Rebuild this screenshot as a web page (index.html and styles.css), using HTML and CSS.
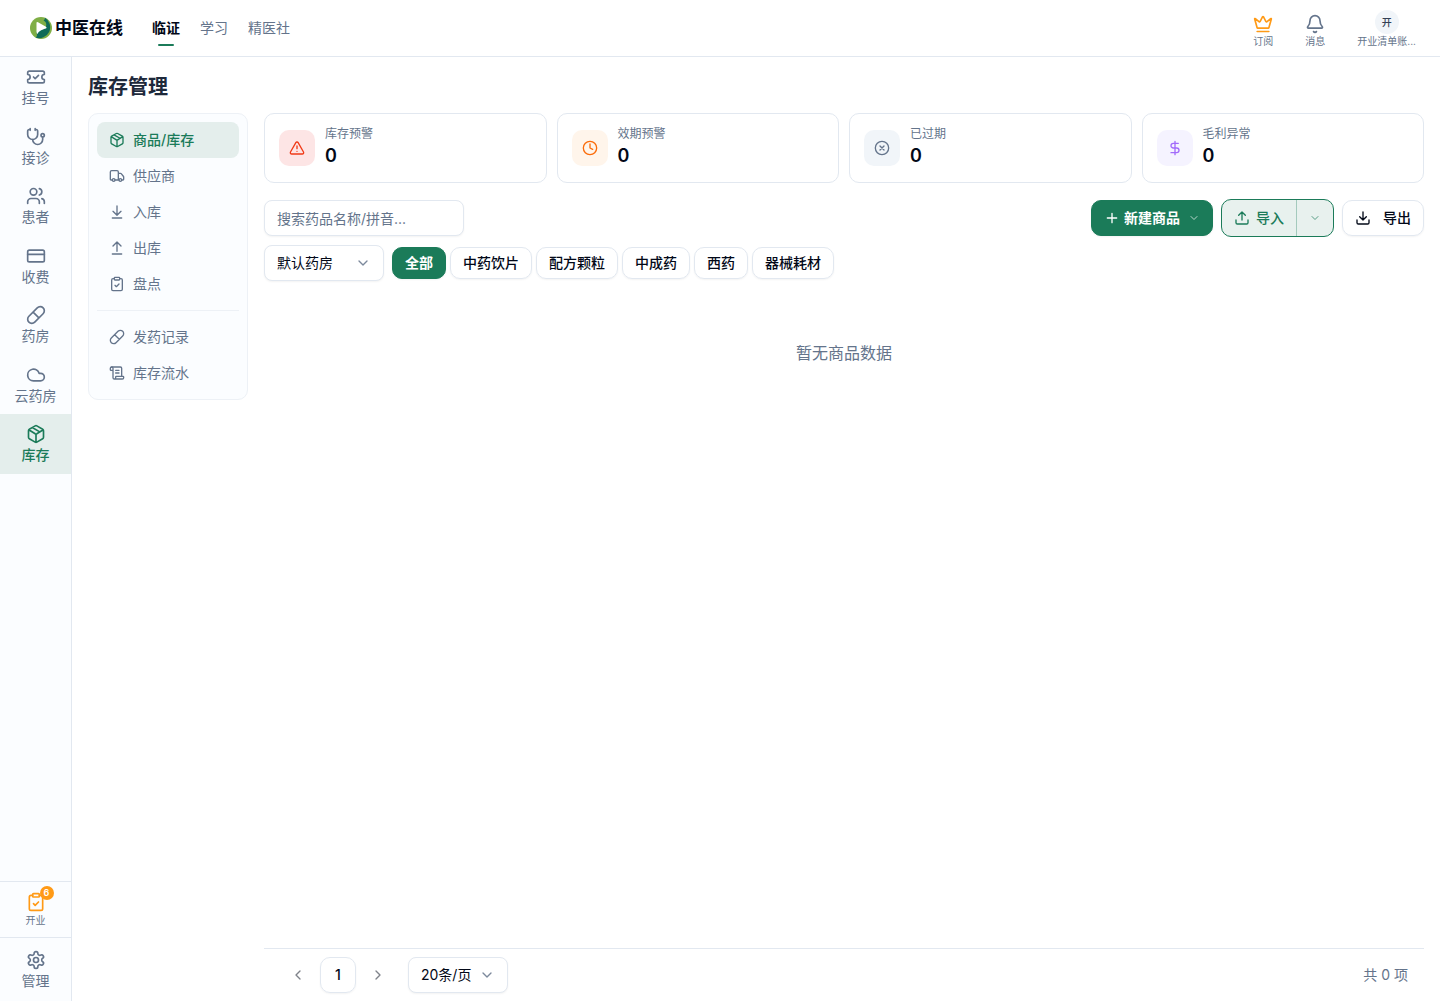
FILE: index.html
```html
<!DOCTYPE html>
<html lang="zh-CN">

<head>
    <meta charset="UTF-8">
    <meta name="viewport" content="width=device-width, initial-scale=1.0">
    <title>库存管理 - 中医在线</title>
    <link rel="stylesheet" href="styles.css">
</head>

<body>
    <!-- 图标 -->
    <svg class="sprite" aria-hidden="true">
        <symbol id="i-ticket" viewBox="0 0 24 24">
            <path d="M2 9a3 3 0 1 1 0 6v2a2 2 0 0 0 2 2h16a2 2 0 0 0 2-2v-2a3 3 0 1 1 0-6V7a2 2 0 0 0-2-2H4a2 2 0 0 0-2 2Z" />
            <path d="m9 12 2 2 4-4" />
        </symbol>
        <symbol id="i-stethoscope" viewBox="0 0 24 24">
            <path d="M11 2v2M5 2v2M5 3H4a2 2 0 0 0-2 2v4a6 6 0 0 0 12 0V5a2 2 0 0 0-2-2h-1" />
            <path d="M8 15a6 6 0 0 0 12 0v-3" />
            <circle cx="20" cy="10" r="2" />
        </symbol>
        <symbol id="i-users" viewBox="0 0 24 24">
            <path d="M16 21v-2a4 4 0 0 0-4-4H6a4 4 0 0 0-4 4v2" />
            <circle cx="9" cy="7" r="4" />
            <path d="M22 21v-2a4 4 0 0 0-3-3.87M16 3.13a4 4 0 0 1 0 7.75" />
        </symbol>
        <symbol id="i-card" viewBox="0 0 24 24">
            <rect width="20" height="14" x="2" y="5" rx="2" />
            <path d="M2 10h20" />
        </symbol>
        <symbol id="i-pill" viewBox="0 0 24 24">
            <path d="m10.5 20.5 10-10a4.95 4.95 0 1 0-7-7l-10 10a4.95 4.95 0 1 0 7 7ZM8.5 8.5l7 7" />
        </symbol>
        <symbol id="i-cloud" viewBox="0 0 24 24">
            <path d="M17.5 19H9a7 7 0 1 1 6.71-9h1.79a4.5 4.5 0 1 1 0 9Z" />
        </symbol>
        <symbol id="i-package" viewBox="0 0 24 24">
            <path d="M11 21.73a2 2 0 0 0 2 0l7-4A2 2 0 0 0 21 16V8a2 2 0 0 0-1-1.73l-7-4a2 2 0 0 0-2 0l-7 4A2 2 0 0 0 3 8v8a2 2 0 0 0 1 1.73zM12 22V12M3.3 7l7.703 4.734a2 2 0 0 0 1.994 0L20.7 7M7.5 4.27l9 5.15" />
        </symbol>
        <symbol id="i-clipboard" viewBox="0 0 24 24">
            <rect width="8" height="4" x="8" y="2" rx="1" />
            <path d="M16 4h2a2 2 0 0 1 2 2v14a2 2 0 0 1-2 2H6a2 2 0 0 1-2-2V6a2 2 0 0 1 2-2h2M9 14l2 2 4-4" />
        </symbol>
        <symbol id="i-settings" viewBox="0 0 24 24">
            <path d="M12.22 2h-.44a2 2 0 0 0-2 2v.18a2 2 0 0 1-1 1.73l-.43.25a2 2 0 0 1-2 0l-.15-.08a2 2 0 0 0-2.73.73l-.22.38a2 2 0 0 0 .73 2.73l.15.1a2 2 0 0 1 1 1.72v.51a2 2 0 0 1-1 1.74l-.15.09a2 2 0 0 0-.73 2.73l.22.38a2 2 0 0 0 2.73.73l.15-.08a2 2 0 0 1 2 0l.43.25a2 2 0 0 1 1 1.73V20a2 2 0 0 0 2 2h.44a2 2 0 0 0 2-2v-.18a2 2 0 0 1 1-1.73l.43-.25a2 2 0 0 1 2 0l.15.08a2 2 0 0 0 2.73-.73l.22-.39a2 2 0 0 0-.73-2.73l-.15-.08a2 2 0 0 1-1-1.74v-.5a2 2 0 0 1 1-1.74l.15-.09a2 2 0 0 0 .73-2.73l-.22-.38a2 2 0 0 0-2.73-.73l-.15.08a2 2 0 0 1-2 0l-.43-.25a2 2 0 0 1-1-1.73V4a2 2 0 0 0-2-2z" />
            <circle cx="12" cy="12" r="3" />
        </symbol>
        <symbol id="i-truck" viewBox="0 0 24 24">
            <path d="M14 18V6a2 2 0 0 0-2-2H4a2 2 0 0 0-2 2v11a1 1 0 0 0 1 1h2M15 18H9M19 18h2a1 1 0 0 0 1-1v-3.65a1 1 0 0 0-.22-.624l-3.48-4.35A1 1 0 0 0 17.52 8H14" />
            <circle cx="17" cy="18" r="2" />
            <circle cx="7" cy="18" r="2" />
        </symbol>
        <symbol id="i-arrow-down" viewBox="0 0 24 24">
            <path d="M12 17V3M6 11l6 6 6-6M19 21H5" />
        </symbol>
        <symbol id="i-arrow-up" viewBox="0 0 24 24">
            <path d="m18 9-6-6-6 6M12 3v14M5 21h14" />
        </symbol>
        <symbol id="i-scroll" viewBox="0 0 24 24">
            <path d="M15 12h-5M15 8h-5M19 17V5a2 2 0 0 0-2-2H4" />
            <path d="M8 21h12a2 2 0 0 0 2-2v-1a1 1 0 0 0-1-1H11a1 1 0 0 0-1 1v1a2 2 0 1 1-4 0V5a2 2 0 1 0-4 0v2a1 1 0 0 0 1 1h3" />
        </symbol>
        <symbol id="i-crown" viewBox="0 0 24 24">
            <path d="M11.562 3.266a.5.5 0 0 1 .876 0L15.39 8.87a1 1 0 0 0 1.516.294L21.183 5.5a.5.5 0 0 1 .798.519l-2.834 10.246a1 1 0 0 1-.956.734H5.81a1 1 0 0 1-.957-.734L2.02 6.02a.5.5 0 0 1 .798-.519l4.276 3.664a1 1 0 0 0 1.516-.294zM5 21h14" />
        </symbol>
        <symbol id="i-bell" viewBox="0 0 24 24">
            <path d="M10.268 21a2 2 0 0 0 3.464 0M3.262 15.326A1 1 0 0 0 4 17h16a1 1 0 0 0 .74-1.673C19.41 13.956 18 12.499 18 8A6 6 0 0 0 6 8c0 4.499-1.411 5.956-2.738 7.326" />
        </symbol>
        <symbol id="i-alert" viewBox="0 0 24 24">
            <path d="m21.73 18-8-14a2 2 0 0 0-3.48 0l-8 14A2 2 0 0 0 4 21h16a2 2 0 0 0 1.73-3M12 9v4M12 17h.01" />
        </symbol>
        <symbol id="i-clock" viewBox="0 0 24 24">
            <circle cx="12" cy="12" r="10" />
            <path d="M12 6v6l4 2" />
        </symbol>
        <symbol id="i-circle-x" viewBox="0 0 24 24">
            <circle cx="12" cy="12" r="10" />
            <path d="m15 9-6 6M9 9l6 6" />
        </symbol>
        <symbol id="i-dollar" viewBox="0 0 24 24">
            <path d="M12 2v20M17 5H9.5a3.5 3.5 0 0 0 0 7h5a3.5 3.5 0 0 1 0 7H6" />
        </symbol>
        <symbol id="i-plus" viewBox="0 0 24 24">
            <path d="M5 12h14M12 5v14" />
        </symbol>
        <symbol id="i-upload" viewBox="0 0 24 24">
            <path d="M21 15v4a2 2 0 0 1-2 2H5a2 2 0 0 1-2-2v-4M17 8l-5-5-5 5M12 3v12" />
        </symbol>
        <symbol id="i-download" viewBox="0 0 24 24">
            <path d="M21 15v4a2 2 0 0 1-2 2H5a2 2 0 0 1-2-2v-4M7 10l5 5 5-5M12 15V3" />
        </symbol>
        <symbol id="i-down" viewBox="0 0 24 24">
            <path d="m6 9 6 6 6-6" />
        </symbol>
        <symbol id="i-left" viewBox="0 0 24 24">
            <path d="m15 18-6-6 6-6" />
        </symbol>
        <symbol id="i-right" viewBox="0 0 24 24">
            <path d="m9 18 6-6-6-6" />
        </symbol>
    </svg>

    <header class="header">
        <a class="logo" href="#">
            <svg class="logo-mark" viewBox="0 0 22 22" aria-hidden="true">
                <circle cx="11" cy="11" r="11" fill="#7fae45" />
                <path d="M15 .8A11 11 0 0 1 5.500 20.500C7.500 19.500 7 17.500 6.500 15L15 11C17.500 8 16 4.500 13.500 3.500C14.500 2.800 15 2 15 .8Z" fill="#0f6b58" />
                <path d="M6.500 6Q6.500 4.500 8 5.200L16 9.800Q17.300 10.700 16 11.600C13 12.500 9 13.500 7.500 17Q6.500 16.500 6.500 15Z" fill="#fff" />
            </svg>
            <span>中医在线</span>
        </a>
        <nav class="top-nav">
            <a class="active" href="#">临证</a>
            <a href="#">学习</a>
            <a href="#">精医社</a>
        </nav>
        <div class="header-right">
            <button class="header-btn subscribe" type="button">
                <svg class="icon icon-lg"><use href="#i-crown" /></svg>
                <span>订阅</span>
            </button>
            <button class="header-btn" type="button">
                <svg class="icon icon-lg"><use href="#i-bell" /></svg>
                <span>消息</span>
            </button>
            <button class="header-btn" type="button">
                <span class="avatar">开</span>
                <span>开业清单账...</span>
            </button>
        </div>
    </header>

    <div class="layout">
        <aside class="sidebar">
            <nav class="side-nav">
                <a class="side-item" href="#"><svg class="icon icon-lg"><use href="#i-ticket" /></svg>挂号</a>
                <a class="side-item" href="#"><svg class="icon icon-lg"><use href="#i-stethoscope" /></svg>接诊</a>
                <a class="side-item" href="#"><svg class="icon icon-lg"><use href="#i-users" /></svg>患者</a>
                <a class="side-item" href="#"><svg class="icon icon-lg"><use href="#i-card" /></svg>收费</a>
                <a class="side-item" href="#"><svg class="icon icon-lg"><use href="#i-pill" /></svg>药房</a>
                <a class="side-item" href="#"><svg class="icon icon-lg"><use href="#i-cloud" /></svg>云药房</a>
                <a class="side-item active" href="#"><svg class="icon icon-lg"><use href="#i-package" /></svg>库存</a>
            </nav>
            <div class="side-section">
                <button class="side-item opening" type="button">
                    <span class="badge-wrap">
                        <svg class="icon icon-lg"><use href="#i-clipboard" /></svg>
                        <span class="badge">6</span>
                    </span>
                    <span>开业</span>
                </button>
            </div>
            <div class="side-section manage">
                <a class="side-item" href="#"><svg class="icon icon-lg"><use href="#i-settings" /></svg>管理</a>
            </div>
        </aside>

        <main class="main">
            <h1>库存管理</h1>
            <div class="content">
                <nav class="menu">
                    <a class="menu-item active" href="#"><svg class="icon"><use href="#i-package" /></svg>商品/库存</a>
                    <a class="menu-item" href="#"><svg class="icon"><use href="#i-truck" /></svg>供应商</a>
                    <a class="menu-item" href="#"><svg class="icon"><use href="#i-arrow-down" /></svg>入库</a>
                    <a class="menu-item" href="#"><svg class="icon"><use href="#i-arrow-up" /></svg>出库</a>
                    <a class="menu-item" href="#"><svg class="icon"><use href="#i-clipboard" /></svg>盘点</a>
                    <hr>
                    <a class="menu-item" href="#"><svg class="icon"><use href="#i-pill" /></svg>发药记录</a>
                    <a class="menu-item" href="#"><svg class="icon"><use href="#i-scroll" /></svg>库存流水</a>
                </nav>

                <section class="panel">
                    <div class="cards">
                        <button class="card" type="button">
                            <span class="card-icon red"><svg class="icon"><use href="#i-alert" /></svg></span>
                            <span class="card-text"><span class="card-label">库存预警</span><span class="card-value">0</span></span>
                        </button>
                        <button class="card" type="button">
                            <span class="card-icon orange"><svg class="icon"><use href="#i-clock" /></svg></span>
                            <span class="card-text"><span class="card-label">效期预警</span><span class="card-value">0</span></span>
                        </button>
                        <button class="card" type="button">
                            <span class="card-icon gray"><svg class="icon"><use href="#i-circle-x" /></svg></span>
                            <span class="card-text"><span class="card-label">已过期</span><span class="card-value">0</span></span>
                        </button>
                        <button class="card" type="button">
                            <span class="card-icon purple"><svg class="icon"><use href="#i-dollar" /></svg></span>
                            <span class="card-text"><span class="card-label">毛利异常</span><span class="card-value">0</span></span>
                        </button>
                    </div>

                    <div class="toolbar">
                        <input class="search" type="text" placeholder="搜索药品名称/拼音..." aria-label="搜索药品">
                        <div class="actions">
                            <button class="btn primary" type="button">
                                <svg class="icon"><use href="#i-plus" /></svg>
                                <span>新建商品</span>
                                <svg class="icon icon-sm"><use href="#i-down" /></svg>
                            </button>
                            <div class="split">
                                <button class="split-main" type="button"><svg class="icon"><use href="#i-upload" /></svg>导入</button>
                                <button class="split-more" type="button" aria-label="更多导入方式"><svg class="icon icon-sm"><use href="#i-down" /></svg></button>
                            </div>
                            <button class="btn export" type="button"><svg class="icon"><use href="#i-download" /></svg>导出</button>
                        </div>
                    </div>

                    <div class="filters">
                        <div class="select store">
                            <select aria-label="药房">
                                <option>默认药房</option>
                            </select>
                            <svg class="icon"><use href="#i-down" /></svg>
                        </div>
                        <div class="chips">
                            <button class="chip active" type="button">全部</button>
                            <button class="chip" type="button">中药饮片</button>
                            <button class="chip" type="button">配方颗粒</button>
                            <button class="chip" type="button">中成药</button>
                            <button class="chip" type="button">西药</button>
                            <button class="chip" type="button">器械耗材</button>
                        </div>
                    </div>

                    <div class="empty">暂无商品数据</div>

                    <footer class="pager">
                        <div class="pages">
                            <button class="page" type="button" aria-label="上一页" disabled><svg class="icon"><use href="#i-left" /></svg></button>
                            <button class="page current" type="button">1</button>
                            <button class="page" type="button" aria-label="下一页" disabled><svg class="icon"><use href="#i-right" /></svg></button>
                        </div>
                        <div class="select size">
                            <select aria-label="每页条数">
                                <option>20条/页</option>
                            </select>
                            <svg class="icon"><use href="#i-down" /></svg>
                        </div>
                        <span class="total">共 0 项</span>
                    </footer>
                </section>
            </div>
        </main>
    </div>
</body>

</html>
```
FILE: styles.css
```css
* {
    box-sizing: border-box;
}

body {
    margin: 0;
    height: 100vh;
    display: flex;
    flex-direction: column;
    font-family: Inter, "Noto Sans CJK SC", sans-serif;
    font-size: 14px;
    line-height: 20px;
    color: #020817;
    background-color: #fff;
}

a {
    color: inherit;
    text-decoration: none;
}

button,
input,
select {
    font: inherit;
    color: inherit;
}

button {
    padding: 0;
    border: none;
    background: none;
    cursor: pointer;
}

.sprite {
    display: none;
}

.icon {
    width: 16px;
    height: 16px;
    flex-shrink: 0;
    fill: none;
    stroke: currentColor;
    stroke-width: 2;
    stroke-linecap: round;
    stroke-linejoin: round;
}

.icon-lg {
    width: 20px;
    height: 20px;
}

.icon-sm {
    width: 12px;
    height: 12px;
    opacity: 0.7;
}

/* 顶栏 */
.header {
    height: 57px;
    flex-shrink: 0;
    display: flex;
    align-items: center;
    padding: 0 16px 0 30px;
    border-bottom: 1px solid #e2e8f0;
}

.logo {
    display: flex;
    align-items: center;
    gap: 3px;
    font-size: 17px;
    font-weight: 600;
}

.logo-mark {
    width: 22px;
    height: 22px;
}

.top-nav {
    display: flex;
    gap: 20px;
    margin-left: 29px;
    color: #64748b;
}

.top-nav a {
    padding: 8px 0;
}

.top-nav .active {
    position: relative;
    color: #020817;
    font-weight: 600;
}

.top-nav .active::after {
    content: "";
    position: absolute;
    left: 50%;
    bottom: 0;
    width: 16px;
    height: 2px;
    margin-left: -8px;
    border-radius: 1px;
    background-color: #1b7b59;
}

.header-right {
    display: flex;
    margin-left: auto;
    padding-top: 2px;
    gap: 16px;
}

.header-btn {
    display: flex;
    flex-direction: column;
    align-items: center;
    justify-content: flex-end;
    padding: 0 8px;
    font-size: 10px;
    line-height: 15px;
    color: #64748b;
}

.subscribe .icon {
    color: #ff9a16;
}

.avatar {
    width: 24px;
    height: 24px;
    border-radius: 50%;
    line-height: 24px;
    font-weight: 500;
    color: #334155;
    background-color: #f1f5f9;
}

.layout {
    flex: 1;
    display: flex;
    min-height: 0;
}

/* 左侧导航 */
.sidebar {
    width: 72px;
    flex-shrink: 0;
    display: flex;
    flex-direction: column;
    border-right: 1px solid #e2e8f0;
    background-color: #fbfdff;
    color: #64748b;
}

.side-nav {
    flex: 1;
}

.side-item {
    width: 100%;
    display: flex;
    flex-direction: column;
    align-items: center;
    gap: 2px;
    padding: 10px 0;
    line-height: 1.25;
}

.side-item.active {
    color: #1b7b59;
    background-color: #e4eeec;
    font-weight: 500;
}

.side-section {
    border-top: 1px solid #e2e8f0;
}

.manage {
    padding: 2px 0;
}

.opening {
    font-size: 10px;
}

.badge-wrap {
    position: relative;
    display: flex;
    color: #ff9a16;
}

.badge {
    position: absolute;
    top: -6px;
    right: -8px;
    width: 14px;
    height: 14px;
    border-radius: 50%;
    font-size: 9px;
    line-height: 14px;
    font-weight: 600;
    color: #fff;
    background-color: #ff9a16;
}

/* 主区域 */
.main {
    flex: 1;
    min-width: 0;
    display: flex;
    flex-direction: column;
    padding: 16px 16px 0;
}

h1 {
    margin: 0 0 12px;
    font-size: 20px;
    line-height: 28px;
    font-weight: 600;
    color: #1e293b;
}

.content {
    flex: 1;
    display: flex;
    gap: 16px;
}

.menu {
    width: 160px;
    flex-shrink: 0;
    align-self: flex-start;
    padding: 8px;
    border: 1px solid #edf1f6;
    border-radius: 10px;
    background-color: #fbfdff;
    color: #64748b;
}

.menu-item {
    display: flex;
    align-items: center;
    gap: 8px;
    padding: 8px 12px;
    border-radius: 8px;
}

.menu-item.active {
    color: #1b7b59;
    background-color: #e4eeec;
    font-weight: 500;
}

.menu hr {
    margin: 8px 0;
    border: none;
    border-top: 1px solid #edf1f6;
}

.panel {
    flex: 1;
    min-width: 0;
    display: flex;
    flex-direction: column;
}

.cards {
    display: grid;
    grid-template-columns: repeat(4, 1fr);
    gap: 10px;
    margin-bottom: 16px;
}

.card {
    display: flex;
    align-items: center;
    gap: 10px;
    padding: 12px 14px;
    border: 1px solid #e2e8f0;
    border-radius: 10px;
    text-align: left;
}

.card-icon {
    width: 36px;
    height: 36px;
    display: flex;
    align-items: center;
    justify-content: center;
    border-radius: 10px;
}

.red {
    color: #f03a17;
    background-color: #fde5e5;
}

.orange {
    color: #fb6c0a;
    background-color: #fff5eb;
}

.gray {
    color: #64748b;
    background-color: #f1f5f9;
}

.purple {
    color: #a26bfa;
    background-color: #f5f3ff;
}

.card-text {
    display: flex;
    flex-direction: column;
}

.card-label {
    font-size: 12px;
    line-height: 16px;
    color: #64748b;
}

.card-value {
    font-size: 18px;
    line-height: 28px;
    font-weight: 600;
}

/* 工具栏 */
.toolbar {
    display: flex;
    align-items: center;
    justify-content: space-between;
    margin-bottom: 8px;
}

.search {
    width: 200px;
    height: 36px;
    padding: 0 12px;
    border: 1px solid #e2e8f0;
    border-radius: 8px;
    background-color: #fff;
    box-shadow: 0 1px 2px rgba(0, 0, 0, 0.05);
}

.search::placeholder {
    color: #64748b;
}

.actions {
    display: flex;
    align-items: center;
    gap: 8px;
}

.btn {
    height: 36px;
    display: flex;
    align-items: center;
    padding: 0 12px;
    border: 1px solid #e2e8f0;
    border-radius: 10px;
    font-weight: 500;
    box-shadow: 0 1px 2px rgba(0, 0, 0, 0.05);
}

.primary {
    gap: 4px;
    border-color: #1b7b59;
    color: #fff;
    background-color: #1b7b59;
    font-weight: 600;
}

.primary .icon-sm {
    margin-left: 4px;
}

.export {
    gap: 12px;
}

.split {
    height: 38px;
    display: flex;
    overflow: hidden;
    border: 1px solid #1b7b59;
    border-radius: 10px;
    color: #1b7b59;
    background-color: #e8f1ee;
}

.split-main {
    display: flex;
    align-items: center;
    gap: 6px;
    padding: 0 12px;
    font-weight: 500;
}

.split-more {
    width: 37px;
    display: flex;
    align-items: center;
    justify-content: center;
    border-left: 1px solid #a4cabd;
}

.filters {
    display: flex;
    align-items: center;
    gap: 8px;
}

.select {
    position: relative;
}

.select select {
    width: 100%;
    height: 36px;
    padding: 0 12px;
    border: 1px solid #e2e8f0;
    border-radius: 8px;
    appearance: none;
    background-color: #fff;
    box-shadow: 0 1px 2px rgba(0, 0, 0, 0.05);
}

.select .icon {
    position: absolute;
    top: 10px;
    right: 13px;
    color: #7c899c;
    pointer-events: none;
}

.store {
    width: 120px;
}

.size {
    width: 100px;
}

.chips {
    display: flex;
    gap: 4px;
}

.chip {
    height: 32px;
    padding: 0 12px;
    border: 1px solid #e2e8f0;
    border-radius: 10px;
    font-weight: 500;
    box-shadow: 0 1px 2px rgba(0, 0, 0, 0.05);
}

.chip.active {
    border-color: #1b7b59;
    color: #fff;
    background-color: #1b7b59;
    font-weight: 600;
}

.empty {
    flex: 1;
    padding-top: 60px;
    text-align: center;
    font-size: 16px;
    line-height: 24px;
    color: #64748b;
}

/* 分页 */
.pager {
    display: flex;
    align-items: center;
    gap: 12px;
    padding: 8px 16px;
    border-top: 1px solid #e2e8f0;
}

.pages {
    display: flex;
    gap: 4px;
}

.page {
    width: 36px;
    height: 36px;
    display: flex;
    align-items: center;
    justify-content: center;
    border-radius: 10px;
    font-weight: 500;
}

.page:disabled {
    opacity: 0.5;
    cursor: default;
}

.page.current {
    border: 1px solid #e2e8f0;
    box-shadow: 0 1px 2px rgba(0, 0, 0, 0.05);
}

.total {
    margin-left: auto;
    color: #64748b;
}
```
